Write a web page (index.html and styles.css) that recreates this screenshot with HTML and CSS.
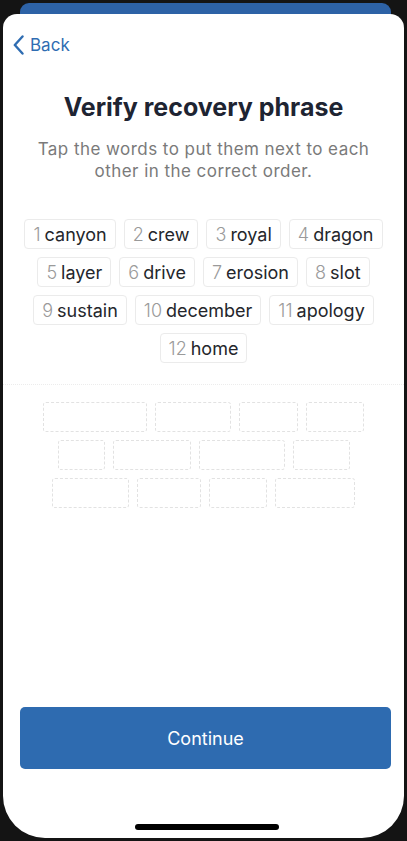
FILE: index.html
```html
<!DOCTYPE html>
<html>
<head>
<meta charset="utf-8">
<link rel="stylesheet" href="styles.css">
</head>
<body>
<div class="screen">
  <div class="behind"></div>
  <div class="sheet">
    <div class="nav">
      <svg class="chev" width="11" height="20" viewBox="0 0 11 20"><path d="M9.5 1.5 L1.8 10 L9.5 18.5" fill="none" stroke="#2f6db2" stroke-width="2.4" stroke-linecap="round" stroke-linejoin="round"/></svg>
      <span class="back">Back</span>
    </div>
    <h1 class="title">Verify recovery phrase</h1>
    <p class="sub">Tap the words to put them next to each other in the correct order.</p>
    <div class="chips">
      <div class="chip"><span class="n">1</span>canyon</div>
      <div class="chip"><span class="n">2</span>crew</div>
      <div class="chip"><span class="n">3</span>royal</div>
      <div class="chip"><span class="n">4</span>dragon</div>
      <div class="chip"><span class="n">5</span>layer</div>
      <div class="chip"><span class="n">6</span>drive</div>
      <div class="chip"><span class="n">7</span>erosion</div>
      <div class="chip"><span class="n">8</span>slot</div>
      <div class="chip"><span class="n">9</span>sustain</div>
      <div class="chip"><span class="n">10</span>december</div>
      <div class="chip"><span class="n">11</span>apology</div>
      <div class="chip"><span class="n">12</span>home</div>
    </div>
    <div class="divider"></div>
    <div class="slots">
      <div class="slot-row">
        <div class="slot" style="width:104px"></div>
        <div class="slot" style="width:76px"></div>
        <div class="slot" style="width:59px"></div>
        <div class="slot" style="width:58px"></div>
      </div>
      <div class="slot-row">
        <div class="slot" style="width:47px"></div>
        <div class="slot" style="width:78px"></div>
        <div class="slot" style="width:86px"></div>
        <div class="slot" style="width:57px"></div>
      </div>
      <div class="slot-row">
        <div class="slot" style="width:77px"></div>
        <div class="slot" style="width:64px"></div>
        <div class="slot" style="width:58px"></div>
        <div class="slot" style="width:80px"></div>
      </div>
    </div>
    <div class="spacer"></div>
    <button class="cta">Continue</button>
    <div class="home-ind"></div>
  </div>
</div>
</body>
</html>
```

FILE: styles.css
```css
html, body {
  margin: 0;
  padding: 0;
  background: #141414;
}
body {
  width: 407px;
  height: 841px;
  overflow: hidden;
  font-family: Inter, "Noto Sans", sans-serif;
}
.screen {
  width: 407px;
  height: 841px;
  display: flex;
  flex-direction: column;
  padding-top: 3px;
  box-sizing: border-box;
}
.behind {
  height: 20px;
  margin: 0 16px 0 20px;
  background: #2d62a6;
  border-radius: 9px 9px 0 0;
  flex: none;
}
.sheet {
  position: relative;
  margin: -9px 3px 0 3px;
  height: 824px;
  background: #fff;
  border-radius: 14px 14px 42px 42px;
  display: flex;
  flex-direction: column;
  align-items: center;
}
.nav {
  align-self: stretch;
  display: flex;
  align-items: center;
  height: 24px;
  padding: 19px 0 0 10px;
  gap: 6px;
}
.chev {
  display: block;
}
.back {
  color: #2f6db2;
  font-size: 17px;
  line-height: 24px;
}
.title {
  margin: 36px 0 0 0;
  font-size: 25px;
  font-weight: 700;
  line-height: 28px;
  color: #1e2432;
  letter-spacing: 0;
}
.sub {
  margin: 17px 0 0 0;
  width: 350px;
  text-align: center;
  font-size: 17px;
  line-height: 22px;
  color: #7a7a7a;
  letter-spacing: 0.45px;
}
.chips {
  margin-top: 37px;
  align-self: stretch;
  padding: 0 12px;
  display: flex;
  flex-wrap: wrap;
  justify-content: center;
  gap: 8px 8px;
}
.chip {
  height: 30px;
  box-sizing: border-box;
  border: 1px solid #ebebeb;
  border-radius: 4px;
  padding: 0 8px;
  display: flex;
  align-items: center;
  font-size: 18px;
  color: #24262b;
  letter-spacing: 0;
}
.chip .n {
  color: #9a9a9a;
  margin-right: 4px;
  font-weight: 300;
}
.divider {
  align-self: stretch;
  margin-top: 21px;
  border-top: 1px dotted #ececec;
}
.slots {
  margin-top: 17px;
  display: flex;
  flex-direction: column;
  gap: 8px;
}
.slot-row {
  display: flex;
  justify-content: center;
  gap: 8px;
}
.slot {
  height: 30px;
  box-sizing: border-box;
  border: 1px dashed #e2e2e2;
  border-radius: 3px;
}
.spacer {
  flex: 1;
}
.cta {
  align-self: stretch;
  margin: 0 13px 0 17px;
  height: 62px;
  border: none;
  border-radius: 5px;
  background: #2e6bb0;
  color: #fff;
  font-family: Inter, "Noto Sans", sans-serif;
  font-size: 18px;
  font-weight: 400;
}
.home-ind {
  margin: 55px 0 8px 6px;
  width: 144px;
  height: 6px;
  border-radius: 3px;
  background: #000;
}
```
